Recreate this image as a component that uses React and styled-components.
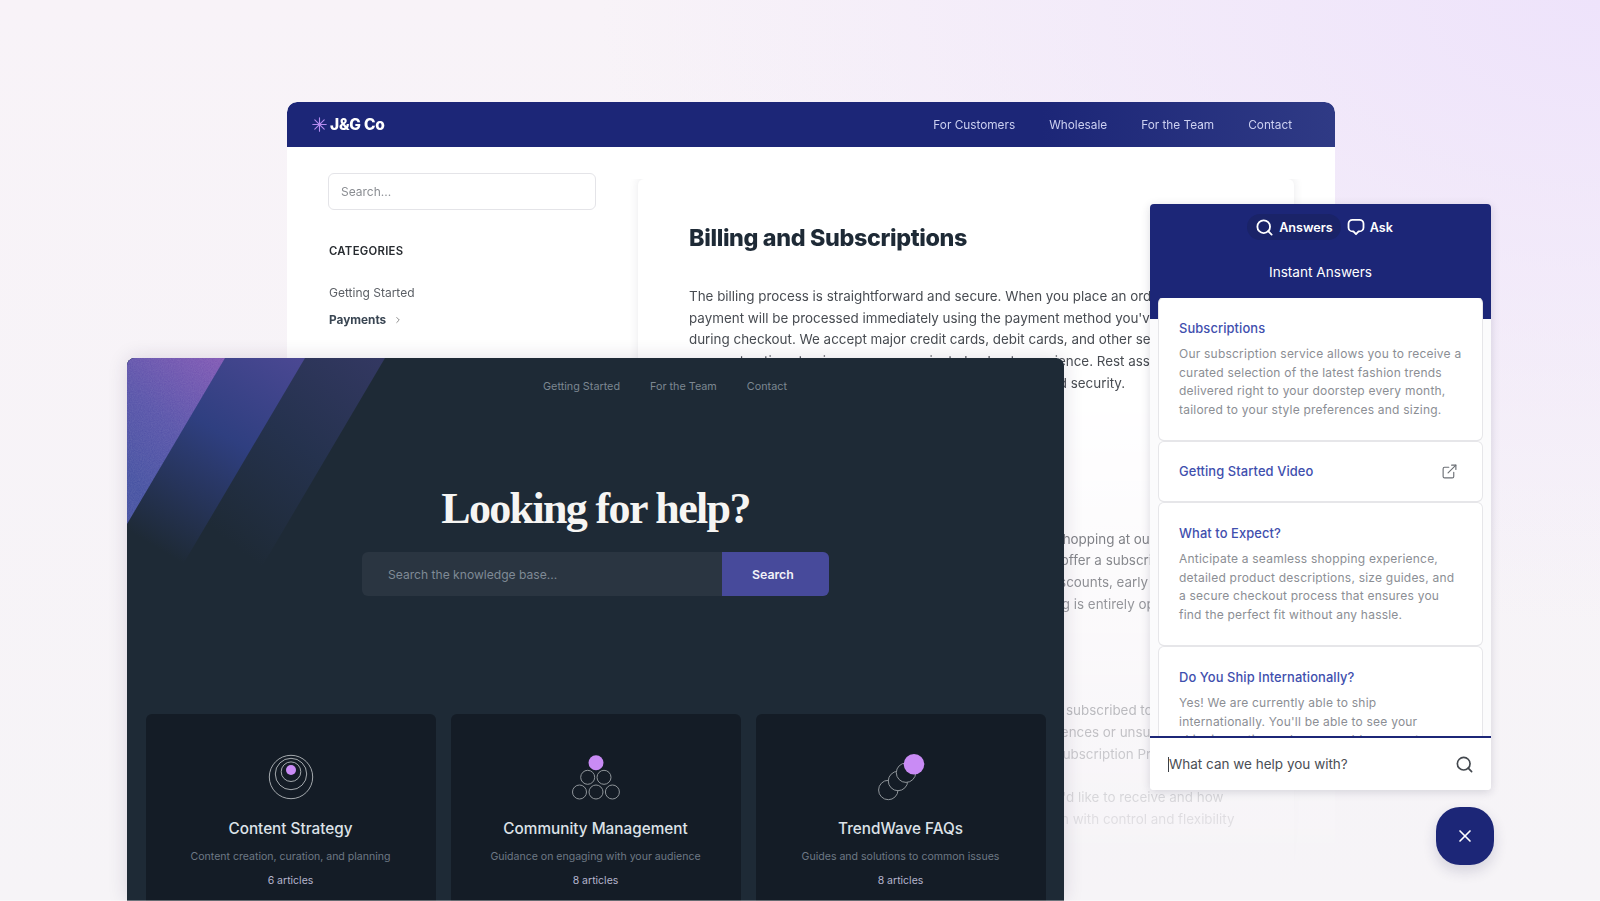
import React from 'react'
import styled, { createGlobalStyle } from 'styled-components'
import { Search, ExternalLink, X, ChevronRight } from 'lucide-react'

const navy = '#1c2677'
const font = '"Inter", "Liberation Sans", sans-serif'

const GlobalStyle = createGlobalStyle`
  html, body { margin: 0; padding: 0; }
  body { font-family: ${font}; background: #f7f5f8; }
  * { box-sizing: border-box; }
`

const Stage = styled.div`
  position: relative;
  width: 1600px;
  height: 901px;
  overflow: hidden;
  background:
    radial-gradient(1000px 620px at 100% 0%, #eee3fb 0%, rgba(238, 227, 251, 0) 100%),
    linear-gradient(180deg, #f8f3f8 0%, #f6f4f7 100%);
`

/* back window */
const BackWindow = styled.div`
  position: absolute;
  left: 287px;
  top: 102px;
  width: 1048px;
  height: 799px;
  background: #fff;
  border-radius: 10px 10px 0 0;
  box-shadow: 0 0 18px rgba(60, 50, 90, 0.12);
  -webkit-mask-image: linear-gradient(180deg, #000 35%, transparent 98%);
  mask-image: linear-gradient(180deg, #000 35%, transparent 98%);
`
const TopBar = styled.header`
  height: 45px;
  display: flex;
  align-items: center;
  justify-content: space-between;
  padding: 0 43px 0 25px;
  background: linear-gradient(90deg, ${navy} 72%, #2f3a85 100%);
  border-radius: 10px 10px 0 0;
`
const Logo = styled.div`
  display: flex;
  align-items: center;
  gap: 3px;
  color: #fff;
  font-size: 15.5px;
  font-weight: 800;
  letter-spacing: -0.2px;
`
const TopNav = styled.nav`
  display: flex;
  gap: 34px;
`
const TopLink = styled.a`
  color: #ccd0f1;
  font-size: 11.8px;
`
const BackBody = styled.div`
  display: flex;
`
const Sidebar = styled.aside`
  width: 351px;
  padding: 26px 0 0 41px;
`
const SideSearch = styled.div`
  width: 268px;
  height: 37px;
  display: flex;
  align-items: center;
  padding-left: 12px;
  border: 1px solid #e4e4e8;
  border-radius: 6px;
  color: #8a8d92;
  font-size: 12px;
`
const SideHeading = styled.h4`
  margin: 34px 0 0 1px;
  font-size: 11.3px;
  line-height: 14px;
  font-weight: 600;
  letter-spacing: 0.3px;
  color: #272b30;
`
const SideItem = styled.div`
  display: flex;
  align-items: center;
  gap: 7px;
  height: 20px;
  margin: ${p => (p.$first ? '24px' : '8px')} 0 0 1px;
  font-size: ${p => (p.$active ? '11.8px' : '12px')};
  font-weight: ${p => (p.$active ? 700 : 400)};
  color: ${p => (p.$active ? '#3a4653' : '#5b5f65')};
`
const Article = styled.main`
  width: 656px;
  margin-top: 32px;
  padding: 42px 40px 0 51px;
  height: 720px;
  box-shadow: 0 -2px 10px rgba(40, 40, 60, 0.1);
  border-radius: 6px 6px 0 0;
  clip-path: inset(0 -14px 0 -14px);
`
const ArticleTitle = styled.h1`
  margin: 0 0 32px;
  font-size: 23.3px;
  line-height: 33px;
  font-weight: 800;
  letter-spacing: -0.35px;
  color: #1e2a36;
`
const Para = styled.p`
  margin: 0 0 ${p => p.$gap || 0}px;
  font-size: 13.4px;
  line-height: 21.7px;
  color: #484c52;
  white-space: nowrap;
`
const Line = styled.span`
  display: block;
`

/* dark window */
const DarkWindow = styled.section`
  position: absolute;
  left: 127px;
  top: 358px;
  width: 937px;
  height: 543px;
  background: #1e2a36;
  border-radius: 8px 8px 0 0;
  overflow: hidden;
  box-shadow: 0 0 20px rgba(40, 30, 70, 0.14);
`
const Stripes = styled.svg`
  position: absolute;
  left: 0;
  top: 0;
`
const DarkInner = styled.div`
  position: relative;
  display: flex;
  flex-direction: column;
  align-items: center;
`
const DarkNav = styled.nav`
  display: flex;
  gap: 30px;
  margin: 21px 0 0 139px;
  height: 15px;
  align-items: center;
`
const DarkLink = styled.a`
  color: #7c8791;
  font-size: 10.8px;
`
const HelpTitle = styled.h1`
  margin: 92px 0 0;
  height: 46px;
  font-family: "Liberation Serif", serif;
  font-size: 44px;
  line-height: 46px;
  font-weight: 700;
  letter-spacing: -1.65px;
  color: #f6f5f3;
`
const HelpSearch = styled.div`
  display: flex;
  width: 467px;
  height: 44px;
  margin-top: 20px;
  border-radius: 6px;
  overflow: hidden;
  background: #2a3541;
`
const HelpInput = styled.div`
  flex: 1;
  display: flex;
  align-items: center;
  padding-left: 26px;
  font-size: 12.1px;
  color: #7f8a95;
`
const HelpButton = styled.div`
  width: 107px;
  display: flex;
  align-items: center;
  padding-left: 30px;
  background: #474a9b;
  color: #f2f2f8;
  font-size: 12.3px;
  font-weight: 600;
`
const CardRow = styled.div`
  display: grid;
  grid-template-columns: repeat(3, 290px);
  gap: 15px;
  margin-top: 118px;
`
const TopicCard = styled.article`
  height: 230px;
  padding-top: 39px;
  display: flex;
  flex-direction: column;
  align-items: center;
  background: #141c26;
  border-radius: 6px;
`
const TopicTitle = styled.h3`
  margin: 18px 0 0;
  font-size: 15.3px;
  line-height: 20px;
  font-weight: 500;
  color: #dde2e8;
`
const TopicText = styled.p`
  margin: 10px 0 0;
  font-size: 10.55px;
  line-height: 16px;
  color: #6e7985;
`
const TopicCount = styled.span`
  margin-top: 8px;
  font-size: 10.5px;
  line-height: 16px;
  color: #b4b4ce;
`

/* chat widget */
const Widget = styled.aside`
  position: absolute;
  left: 1150px;
  top: 204px;
  width: 341px;
  height: 586px;
  display: flex;
  flex-direction: column;
  background: linear-gradient(180deg, ${navy} 115px, #fbfbfc 115px);
  border-radius: 4px;
  overflow: hidden;
  box-shadow: 0 2px 10px rgba(30, 30, 60, 0.16);
`
const WidgetHead = styled.div`
  flex: none;
  height: 94px;
  padding-top: 10px;
`
const Tabs = styled.div`
  display: flex;
  justify-content: center;
  margin-left: 5px;
`
const Tab = styled.div`
  height: 26px;
  display: flex;
  align-items: center;
  gap: 5px;
  padding: 0 ${p => (p.$active ? '8px' : '6px')};
  border-radius: 13px;
  color: #fff;
  font-size: 12.6px;
  font-weight: 600;
  background: ${p => (p.$active ? '#1a2368' : 'transparent')};
`
const WidgetTitle = styled.div`
  margin-top: 23px;
  text-align: center;
  color: #fff;
  font-size: 13.6px;
  line-height: 18px;
  font-weight: 400;
`
const AnswerList = styled.div`
  flex: 1;
  min-height: 0;
  padding: 0 9px;
  overflow: hidden;
  display: flex;
  flex-direction: column;
  gap: 2px;
`
const Answer = styled.div`
  flex: none;
  display: ${p => (p.$row ? 'flex' : 'block')};
  align-items: center;
  justify-content: space-between;
  padding: ${p => (p.$row ? '21px 24px 21px 20px' : '22px 19px 21px 20px')};
  background: #fff;
  border-radius: 5px;
  box-shadow: 0 0 0 1px #e6e6e9, 0 1px 1px rgba(0, 0, 0, 0.12);
`
const AnswerTitle = styled.h4`
  margin: 0;
  font-size: 12.9px;
  line-height: 17px;
  font-weight: 500;
  letter-spacing: 0.1px;
  color: #3f4fae;
`
const AnswerText = styled.p`
  margin: 8px 0 0;
  font-size: 12px;
  line-height: 18.5px;
  letter-spacing: 0.22px;
  color: #8b8e94;
`
const Footer = styled.div`
  flex: none;
  height: 54px;
  display: flex;
  align-items: center;
  justify-content: space-between;
  padding: 0 17px 0 19px;
  background: #fff;
  border-top: 2px solid ${navy};
  color: #4a4e54;
  font-size: 13.5px;
`
const FooterText = styled.span`
  border-left: 1px solid #3c4046;
  margin-left: -1px;
  line-height: 15px;
`
const Fab = styled.button`
  position: absolute;
  left: 1436px;
  top: 807px;
  width: 58px;
  height: 58px;
  display: flex;
  align-items: center;
  justify-content: center;
  border: 0;
  border-radius: 24px;
  background: ${navy};
  color: #fff;
  box-shadow: 0 6px 14px rgba(30, 30, 80, 0.16);
`
const EdgeLine = styled.div`
  position: absolute;
  left: 0;
  right: 0;
  bottom: 0;
  height: 1px;
  background: rgba(255, 255, 255, 0.35);
`

const Spark = () => (
  <svg width="15" height="15" viewBox="0 0 15 15" fill="none" stroke="#b58cf0" strokeWidth="1.1" strokeLinecap="round">
    <path d="M7.5 .8v13.4M.8 7.5h13.4M2.8 2.8l9.4 9.4M12.2 2.8l-9.4 9.4" />
  </svg>
)

const Bubble = () => (
  <svg width="18" height="18" viewBox="0 0 18 18" fill="none" stroke="#fff" strokeWidth="1.8" strokeLinejoin="round">
    <path d="M5.5 1.8h7a4 4 0 0 1 4 4v3.6a4 4 0 0 1-4 4h-.9L9 16.2l-2.6-2.8h-.9a4 4 0 0 1-4-4V5.8a4 4 0 0 1 4-4z" />
  </svg>
)

const TargetIcon = () => (
  <svg width="48" height="48" viewBox="0 0 48 48" fill="none" stroke="#a4a9ad" strokeWidth="1">
    <circle cx="24" cy="24" r="21.7" />
    <circle cx="24" cy="21" r="15.7" />
    <circle cx="24" cy="18.7" r="9.8" />
    <circle cx="24" cy="17" r="5" fill="#c98bf5" stroke="none" />
  </svg>
)

const PyramidIcon = () => (
  <svg width="48" height="48" viewBox="0 0 48 48" fill="none" stroke="#8f959a" strokeWidth="1">
    <circle cx="24" cy="9.7" r="7.5" fill="#c98bf5" stroke="none" />
    <circle cx="15.7" cy="24.3" r="7" />
    <circle cx="32" cy="24.3" r="7" />
    <circle cx="7.5" cy="39" r="7" />
    <circle cx="24" cy="39" r="7" />
    <circle cx="40.4" cy="39" r="7" />
  </svg>
)

const TrailIcon = () => (
  <svg width="48" height="48" viewBox="0 0 48 48" fill="none" stroke="#8f959a" strokeWidth="1">
    <circle cx="11.3" cy="37" r="9.7" fill="#141c26" />
    <circle cx="21" cy="28" r="9.7" fill="#141c26" />
    <circle cx="29" cy="19.7" r="9.7" fill="#141c26" />
    <circle cx="37" cy="11.3" r="10.3" fill="#c98bf5" stroke="none" />
  </svg>
)

const StripeArt = () => (
  <Stripes width="320" height="460" viewBox="0 0 320 460">
    <defs>
      <linearGradient id="s1" gradientUnits="userSpaceOnUse" x1="98" y1="0" x2="0" y2="120">
        <stop offset="0" stopColor="#7f55b3" />
        <stop offset="0.55" stopColor="#5651a8" />
        <stop offset="1" stopColor="#434fa0" />
      </linearGradient>
      <linearGradient id="s2" gradientUnits="userSpaceOnUse" x1="178" y1="0" x2="55" y2="205">
        <stop offset="0" stopColor="#4b4893" />
        <stop offset="0.45" stopColor="#2f3f80" />
        <stop offset="1" stopColor="#1e2a36" />
      </linearGradient>
      <linearGradient id="s3" gradientUnits="userSpaceOnUse" x1="258" y1="0" x2="110" y2="190">
        <stop offset="0" stopColor="#333862" />
        <stop offset="0.5" stopColor="#25324e" />
        <stop offset="1" stopColor="#1e2a36" />
      </linearGradient>
      <filter id="grain" x="0" y="0" width="100%" height="100%">
        <feTurbulence type="fractalNoise" baseFrequency="0.9" numOctaves="2" />
        <feColorMatrix values="0 0 0 0 1  0 0 0 0 1  0 0 0 0 1  0 0 0 0.12 0" />
        <feComposite in2="SourceGraphic" operator="in" />
      </filter>
    </defs>
    <polygon points="0,0 258,0 0,437" fill="url(#s3)" />
    <polygon points="0,0 178,0 0,301" fill="url(#s2)" />
    <polygon points="0,0 98,0 0,166" fill="url(#s1)" />
    <polygon points="0,0 98,0 0,166" fill="#fff" filter="url(#grain)" />
  </Stripes>
)

const topics = [
  { icon: <TargetIcon />, title: 'Content Strategy', text: 'Content creation, curation, and planning', count: '6 articles' },
  { icon: <PyramidIcon />, title: 'Community Management', text: 'Guidance on engaging with your audience', count: '8 articles' },
  { icon: <TrailIcon />, title: 'TrendWave FAQs', text: 'Guides and solutions to common issues', count: '8 articles' },
]

export default function App() {
  return (
    <Stage>
      <GlobalStyle />
      <BackWindow>
        <TopBar>
          <Logo><Spark />J&amp;G Co</Logo>
          <TopNav>
            <TopLink>For Customers</TopLink>
            <TopLink>Wholesale</TopLink>
            <TopLink>For the Team</TopLink>
            <TopLink>Contact</TopLink>
          </TopNav>
        </TopBar>
        <BackBody>
          <Sidebar>
            <SideSearch>Search...</SideSearch>
            <SideHeading>CATEGORIES</SideHeading>
            <SideItem $first>Getting Started</SideItem>
            <SideItem $active>Payments <ChevronRight size={10} color="#777" /></SideItem>
          </Sidebar>
          <Article>
            <ArticleTitle>Billing and Subscriptions</ArticleTitle>
            <Para $gap={134}>
              <Line>The billing process is straightforward and secure. When you place an order, your</Line>
              <Line>payment will be processed immediately using the payment method you've selected</Line>
              <Line>during checkout. We accept major credit cards, debit cards, and other secure</Line>
              <Line>payment options to give you a convenient checkout experience. Rest assured</Line>
              <Line>payment details are guarded via end-to-end encryption and security.</Line>
            </Para>
            <Para $gap={85}>
              <Line>Thank you for choosing us, and for trusting us for all your shopping at our store</Line>
              <Line>For customers who want fresh deliveries of our goods, we offer a subscription</Line>
              <Line>Subscribers enjoy a range of benefits, including: special discounts, early access</Line>
              <Line>Please note that signing up is not mandatory, so subscribing is entirely optional</Line>
            </Para>
            <Para $gap={21.7}>
              <Line>If at any time you wish to change the emails you have been subscribed to</Line>
              <Line>You can easily update all your newsletters and email preferences or unsubscribe</Line>
              <Line>entirely whenever you like from your account page under Subscription Preferences</Line>
            </Para>
            <Para>
              <Line>Simply pick exactly which categories and new updates you'd like to receive and how</Line>
              <Line>This gives you a tailored way of managing your subscription with control and flexibility</Line>
            </Para>
          </Article>
        </BackBody>
      </BackWindow>

      <DarkWindow>
        <StripeArt />
        <DarkInner>
          <DarkNav>
            <DarkLink>Getting Started</DarkLink>
            <DarkLink>For the Team</DarkLink>
            <DarkLink>Contact</DarkLink>
          </DarkNav>
          <HelpTitle>Looking for help?</HelpTitle>
          <HelpSearch>
            <HelpInput>Search the knowledge base...</HelpInput>
            <HelpButton>Search</HelpButton>
          </HelpSearch>
          <CardRow>
            {topics.map(t => (
              <TopicCard key={t.title}>
                {t.icon}
                <TopicTitle>{t.title}</TopicTitle>
                <TopicText>{t.text}</TopicText>
                <TopicCount>{t.count}</TopicCount>
              </TopicCard>
            ))}
          </CardRow>
        </DarkInner>
      </DarkWindow>

      <Widget>
        <WidgetHead>
          <Tabs>
            <Tab $active><Search size={19} strokeWidth={2.3} />Answers</Tab>
            <Tab><Bubble />Ask</Tab>
          </Tabs>
          <WidgetTitle>Instant Answers</WidgetTitle>
        </WidgetHead>
        <AnswerList>
          <Answer>
            <AnswerTitle>Subscriptions</AnswerTitle>
            <AnswerText>Our subscription service allows you to receive a curated selection of the latest fashion trends delivered right to your doorstep every month, tailored to your style preferences and sizing.</AnswerText>
          </Answer>
          <Answer $row>
            <AnswerTitle>Getting Started Video</AnswerTitle>
            <ExternalLink size={17} strokeWidth={1.6} color="#6b6f75" />
          </Answer>
          <Answer>
            <AnswerTitle>What to Expect?</AnswerTitle>
            <AnswerText>Anticipate a seamless shopping experience, detailed product descriptions, size guides, and a secure checkout process that ensures you find the perfect fit without any hassle.</AnswerText>
          </Answer>
          <Answer>
            <AnswerTitle>Do You Ship Internationally?</AnswerTitle>
            <AnswerText>Yes! We are currently able to ship internationally. You'll be able to see your shipping options when you add your cart.</AnswerText>
          </Answer>
        </AnswerList>
        <Footer>
          <FooterText>What can we help you with?</FooterText>
          <Search size={19} strokeWidth={2.1} color="#43484e" />
        </Footer>
      </Widget>

      <Fab><X size={20} strokeWidth={2} /></Fab>
      <EdgeLine />
    </Stage>
  )
}
